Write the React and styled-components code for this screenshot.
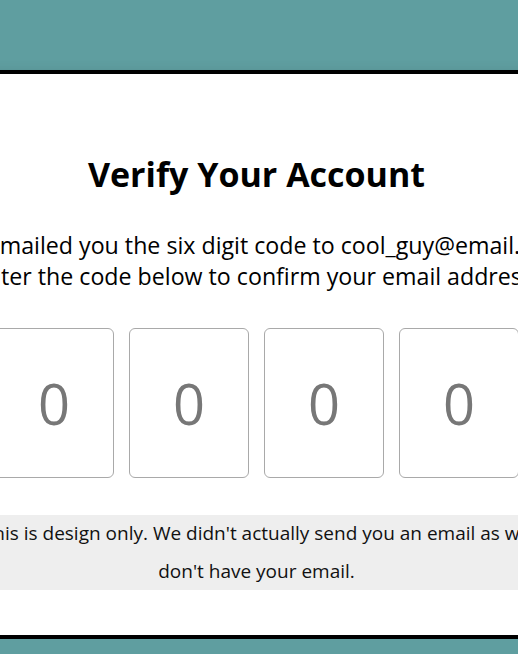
import React from "react";
import styled, { createGlobalStyle } from "styled-components";

const GlobalStyle = createGlobalStyle`
  html, body {
    margin: 0;
    padding: 0;
    background: #5f9ea0;
    font-family: "Open Sans", "Noto Sans", sans-serif;
    overflow: hidden;
  }
`;

const Page = styled.div`
  display: flex;
  justify-content: center;
  padding: 70px 5px 0 0;
  width: 100%;
  box-sizing: border-box;
`;

const Card = styled.div`
  flex-shrink: 0;
  width: 900px;
  background: #fff;
  border-top: 4px solid #000;
  border-bottom: 4px solid #000;
  box-shadow: 0 8px 14px rgba(0, 0, 0, 0.35);
  padding: 76px 0 45px;
  display: flex;
  flex-direction: column;
  align-items: center;
  text-align: center;
`;

const Title = styled.h1`
  margin: 0;
  font-size: 34px;
  line-height: 48px;
  font-weight: 700;
  color: #000;
`;

const Lead = styled.p`
  margin: 32px 0 0;
  font-size: 23.2px;
  line-height: 31px;
  color: #000;
`;

const Codes = styled.div`
  display: flex;
  gap: 15px;
  margin-top: 36px;
`;

const CodeInput = styled.input`
  width: 120px;
  height: 150px;
  box-sizing: border-box;
  border: 1px solid #a9a9a9;
  border-radius: 6px;
  background: #fff;
  text-align: center;
  font-family: "Open Sans", sans-serif;
  font-size: 56px;
  color: #777;
  outline: none;
  padding: 0;

  &::placeholder {
    color: #777;
  }
`;

const Note = styled.div`
  margin-top: 37px;
  width: 575px;
  padding: 0 20px;
  background: #eee;
  font-size: 19px;
  line-height: 37.5px;
  color: #111;
`;

export default function App() {
  const digits = [0, 1, 2, 3, 4, 5];
  return (
    <>
      <GlobalStyle />
      <Page>
        <Card>
          <Title>Verify Your Account</Title>
          <Lead>
            We emailed you the six digit code to cool_guy@email.com
            <br />
            Enter the code below to confirm your email address.
          </Lead>
          <Codes>
            {digits.map((d) => (
              <CodeInput key={d} placeholder="0" maxLength={1} />
            ))}
          </Codes>
          <Note>
            This is design only. We didn't actually send you an email as we
            don't have your email.
          </Note>
        </Card>
      </Page>
    </>
  );
}
